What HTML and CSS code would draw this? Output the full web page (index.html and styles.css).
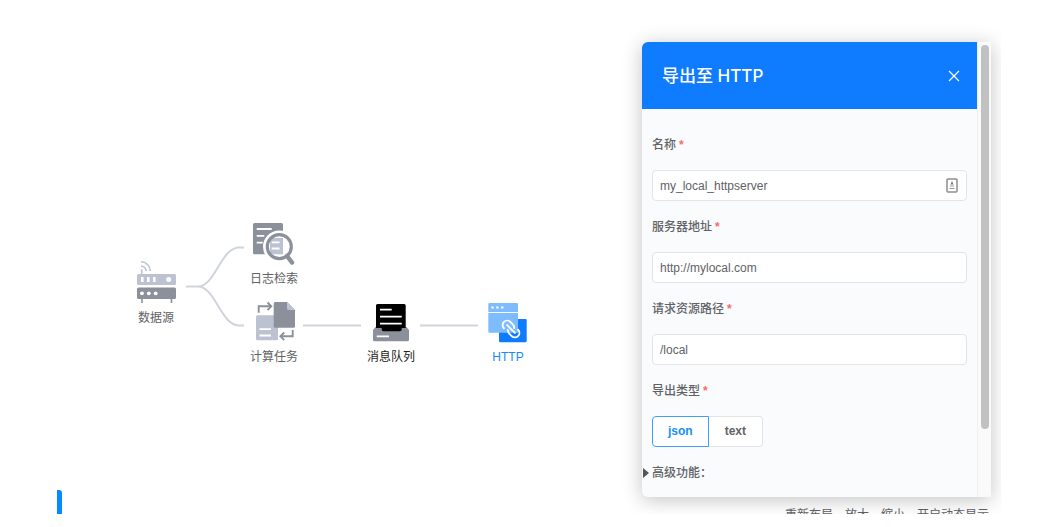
FILE: index.html
```html
<!DOCTYPE html>
<html lang="zh-CN">
<head>
<meta charset="utf-8">
<title>导出至 HTTP</title>
<link rel="stylesheet" href="styles.css">
</head>
<body>
<main class="workspace">
  <svg class="edges" width="600" height="400" viewBox="0 0 600 400" aria-hidden="true">
    <path d="M186 286.500H198C215 286.500 221 247.500 239 247.500H244M198 286.500C215 286.500 221 325.500 239 325.500H244M303 325.500H361M420 325.500H478"/>
  </svg>

  <div class="node node-source">
    <svg viewBox="0 0 48 48" aria-hidden="true">
      <g fill="none" stroke="#bcc2d2" stroke-width="1.600"><path d="M9.700 16V11.500M9 3.800A9.300 9.300 0 0 1 18.300 13M9 8A5 5 0 0 1 14 13"/></g>
      <rect x="5" y="16" width="39" height="11" rx="1.500" fill="#bcc2d2"/>
      <rect x="5" y="29.500" width="39" height="11.500" rx="1.500" fill="#8b909a"/>
      <path d="M10 41V45M39.500 41V45" stroke="#8b909a" stroke-width="1.600"/>
      <g fill="#fff"><rect x="9" y="19" width="2.600" height="5"/><rect x="15" y="19" width="2.600" height="5"/><rect x="21" y="19" width="2.600" height="5"/><circle cx="36.700" cy="21.500" r="2.500"/><circle cx="10" cy="35.300" r="1.900"/><circle cx="16.800" cy="35.300" r="1.900"/><circle cx="23.700" cy="35.300" r="1.900"/></g>
    </svg>
    <span>数据源</span>
  </div>

  <div class="node node-log">
    <svg viewBox="0 0 48 48" aria-hidden="true">
      <rect x="3" y="4" width="30" height="31.300" rx="1.500" fill="#8b909a"/>
      <path d="M6.700 10H21.700M6.700 16.800H14.300M6.700 23.700H12.700" stroke="#fff" stroke-width="1.800"/>
      <circle cx="29.300" cy="27.700" r="16.300" fill="#fff"/>
      <path d="M20 19H33V35.300H20Z" fill="#bcc2d2"/>
      <path d="M21.700 23.300H29.500M21.700 29.500H29.500" stroke="#fff" stroke-width="1.800"/>
      <circle cx="29.300" cy="27.700" r="12" fill="none" stroke="#8b909a" stroke-width="3.200"/>
      <path d="M37 37L42 43.500" stroke="#8b909a" stroke-width="4.500" stroke-linecap="round"/>
    </svg>
    <span>日志检索</span>
  </div>

  <div class="node node-compute">
    <svg viewBox="0 0 48 48" aria-hidden="true">
      <rect x="6" y="18.300" width="22" height="25" rx="1.500" fill="#bcc2d2"/>
      <path d="M9.500 32.200H21M9.500 38.500H21" stroke="#fff" stroke-width="1.800"/>
      <path d="M25.200 5H37L45 13V29.200Q45 30.700 43.500 30.700H25.200Q23.700 30.700 23.700 29.200V6.500Q23.700 5 25.200 5Z" fill="#8b909a"/>
      <path d="M37 5L45 13H38.500Q37 13 37 11.500Z" fill="#bcc2d2"/>
      <path d="M8.700 15.700V9.300H20.800M17.500 5.500L21.300 9.300L17.500 13.100M42.700 33V39.300H30.800M34.200 35.500L30.400 39.300L34.200 43.100" fill="none" stroke="#8b909a" stroke-width="1.900"/>
    </svg>
    <span>计算任务</span>
  </div>

  <div class="node node-queue">
    <svg viewBox="0 0 48 48" aria-hidden="true">
      <path d="M8.500 30H39.500L42 33V42.800Q42 44.300 40.500 44.300H7.500Q6 44.300 6 42.800V33Z" fill="#8b909a"/>
      <path d="M10.500 7H37.200Q38.700 7 38.700 8.500V31H34.700V32.500Q34.700 34.200 33 34.200H16.400Q14.700 34.200 14.700 32.500V31H9V8.500Q9 7 10.500 7Z" fill="#000"/>
      <path d="M13 12.700H24.700M13 19.700H34.700M13 26.700H34.700M9.700 39.300H22" stroke="#fff" stroke-width="1.800"/>
    </svg>
    <span>消息队列</span>
  </div>

  <div class="node node-http">
    <svg viewBox="0 0 48 48" aria-hidden="true">
      <rect x="15" y="22" width="27.700" height="23.300" rx="1.200" fill="#0f7bff"/>
      <path d="M5.500 6H32.800Q34 6 34 7.200V15H4.300V7.200Q4.300 6 5.500 6ZM4.300 16H34V35.700H5.500Q4.300 35.700 4.300 34.500Z" fill="#7dbdff"/>
      <path d="M7.300 10.500H9.700M12.200 10.500H14.600M17.100 10.500H19.500" stroke="#fff" stroke-width="2.200"/>
      <g transform="rotate(45 27 32)" fill="none" stroke="#fff" stroke-width="1.900" stroke-linecap="round">
        <path d="M21.500 32H32.500M21.500 36.500A4.500 4.500 0 1 1 21.500 27.500H25A4.500 4.500 0 0 1 28.500 29M32.500 27.500A4.500 4.500 0 1 1 32.500 36.500H29A4.500 4.500 0 0 1 25.500 35"/>
      </g>
    </svg>
    <span>HTTP</span>
  </div>

  <div class="marker"></div>

  <nav class="toolbar">
    <button type="button">重新布局</button>
    <button type="button">放大</button>
    <button type="button">缩小</button>
    <button type="button">开启动态显示</button>
  </nav>

  <aside class="panel">
    <div class="panel-content">
      <header class="panel-header">
        <h1>导出至 HTTP</h1>
        <button class="close" type="button" aria-label="关闭">
          <svg width="12" height="12" viewBox="0 0 12 12"><path d="M1 1L11 11M11 1L1 11" stroke="currentColor" stroke-width="1.200"/></svg>
        </button>
      </header>
      <form class="form">
        <div class="field">
          <label for="name">名称<i>*</i></label>
          <div class="input-wrap">
            <input id="name" type="text" value="my_local_httpserver">
            <svg class="autofill" width="12" height="15" viewBox="0 0 12 15" aria-hidden="true"><rect x="1" y="1" width="10" height="13" rx="1" fill="#fff" stroke="#8e8e8e" stroke-width="1.500"/><path d="M6 3L7.500 6.500H4.500Z" fill="#777"/><path d="M4 8H8M3.500 10.500H8.500" stroke="#999" stroke-width="1.200"/></svg>
          </div>
        </div>
        <div class="field">
          <label for="server">服务器地址<i>*</i></label>
          <input id="server" type="text" value="http://mylocal.com">
        </div>
        <div class="field">
          <label for="path">请求资源路径<i>*</i></label>
          <input id="path" type="text" value="/local">
        </div>
        <fieldset class="field">
          <legend>导出类型<i>*</i></legend>
          <div class="segments">
            <label><input type="radio" name="type" checked><span>json</span></label>
            <label><input type="radio" name="type"><span>text</span></label>
          </div>
        </fieldset>
        <details>
          <summary>高级功能：</summary>
        </details>
      </form>
    </div>
    <div class="scrollbar"><div class="thumb"></div></div>
  </aside>
</main>
</body>
</html>
```
FILE: styles.css
```css
* { box-sizing: border-box; }

body {
  margin: 0;
  height: 100vh;
  padding: 0 37px 13px 0;
  background: #fff;
  color: #606266;
  font: 12px/20px "Liberation Sans", "Noto Sans CJK SC", sans-serif;
}

button, input { font: inherit; color: inherit; }

.workspace {
  position: relative;
  height: 100%;
  overflow: hidden;
}

/* Flow diagram */
.edges { position: absolute; left: 0; top: 0; }
.edges path { fill: none; stroke: #d0d4dc; stroke-width: 2; }

.node {
  position: absolute;
  display: flex;
  flex-direction: column;
  align-items: center;
  width: 48px;
  line-height: 25px;
  white-space: nowrap;
}
.node svg { width: 48px; height: 48px; }
.node-source { left: 132px; top: 258px; }
.node-log { left: 250px; top: 219px; }
.node-compute { left: 250px; top: 297px; }
.node-queue { left: 367px; top: 297px; color: #222; }
.node-http { left: 484px; top: 297px; color: #1888ff; }

.marker {
  position: absolute;
  left: 57px;
  bottom: 0;
  width: 5px;
  height: 24px;
  border-radius: 0 3px 0 0;
  background: #058aff;
}

.toolbar {
  position: absolute;
  right: 12px;
  bottom: -11px;
  display: flex;
  gap: 12px;
}
.toolbar button { padding: 0; border: 0; background: none; }

/* Export panel */
.panel {
  position: absolute;
  top: 42px;
  right: 10px;
  bottom: 17px;
  width: 349px;
  display: flex;
  overflow: hidden;
  border-radius: 6px 0 0 6px;
  background: #fafbfd;
  box-shadow: 0 3px 20px rgba(0, 0, 0, 0.24);
}
.panel-content { flex: 1; }

.panel-header {
  display: flex;
  align-items: center;
  justify-content: space-between;
  height: 67px;
  padding: 0 17px 0 20px;
  background: #0f7bff;
  color: #fff;
}
.panel-header h1 {
  margin: 0;
  font: 500 17px/24px Inter, "Noto Sans CJK SC", sans-serif;
}
.close { display: flex; padding: 0; border: 0; background: none; }

.form {
  display: flex;
  flex-direction: column;
  gap: 16px;
  padding: 26px 10px 0;
}
.field {
  display: flex;
  flex-direction: column;
  gap: 15px;
  min-width: 0;
  margin: 0;
  padding: 0;
  border: 0;
}
.field > label, legend, summary { font-weight: 500; color: #606266; }
legend { padding: 0; margin-bottom: 15px; }
.field i { margin-left: 3px; color: #f56c6c; font-style: normal; font-weight: 700; }

.input-wrap { position: relative; }
.autofill { position: absolute; right: 9px; top: 8px; }
input[type="text"] {
  display: block;
  width: 100%;
  height: 31px;
  padding: 0 7px;
  border: 1px solid #e2e4e8;
  border-radius: 4px;
  background: #fff;
}

.segments { display: flex; font-weight: 700; }
.segments input { position: absolute; opacity: 0; }
.segments span {
  display: block;
  padding: 5px 16px;
  border: 1px solid #e2e4e8;
  border-left: 0;
  border-radius: 0 4px 4px 0;
  background: #fff;
  line-height: 19px;
}
.segments label:first-child span {
  padding: 5px 15px;
  border-left: 1px solid #e2e4e8;
  border-radius: 4px 0 0 4px;
}
.segments input:checked + span { border-color: #409eff; color: #168fff; }

summary {
  display: flex;
  align-items: center;
  gap: 3px;
  margin-left: -9px;
  list-style: none;
}
summary::before {
  content: "";
  border-left: 6px solid #555;
  border-top: 5px solid transparent;
  border-bottom: 5px solid transparent;
}

.scrollbar {
  width: 14px;
  padding: 3px 2px 0 3px;
  border-left: 1px solid #eeeff1;
  background: #fafafa;
}
.thumb { height: 85%; border-radius: 4px; background: #c1c1c1; }
```
